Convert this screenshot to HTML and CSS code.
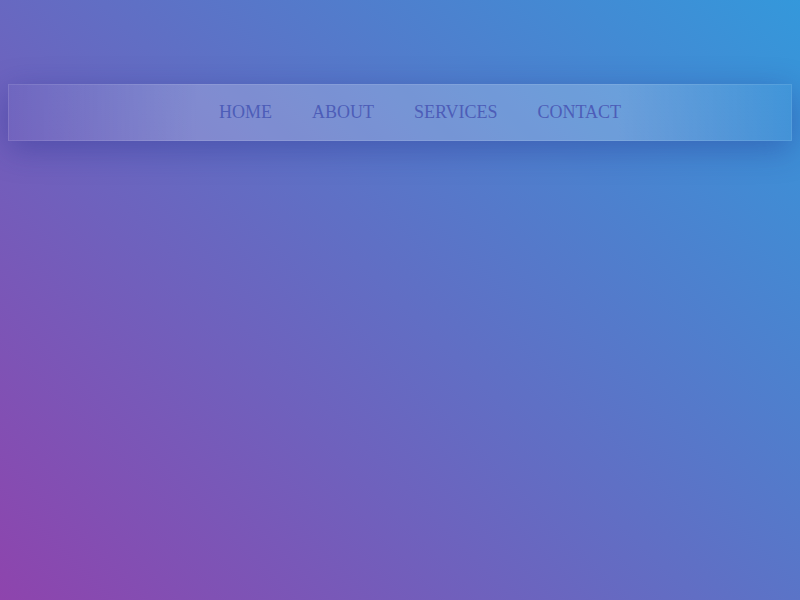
FILE: index.html
```html
<!DOCTYPE html>
<html>
<head>
<meta charset="utf-8">
<link rel="stylesheet" href="styles.css">
</head>
<body>
<nav class="nav">
  <ul class="nav-list">
    <li><a class="nav-link" href="#">HOME</a></li>
    <li><a class="nav-link" href="#">ABOUT</a></li>
    <li><a class="nav-link" href="#">SERVICES</a></li>
    <li><a class="nav-link" href="#">CONTACT</a></li>
  </ul>
</nav>
</body>
</html>
```
FILE: styles.css
```css
html, body {
  height: 100%;
}
body {
  margin: 0;
  padding: 84px 8px 0;
  box-sizing: border-box;
  background: linear-gradient(45deg, #8e44ad 0%, #3498db 100%);
  font-family: "Liberation Serif", "Times New Roman", serif;
  overflow: hidden;
}
.nav {
  height: 57px;
  box-sizing: border-box;
  display: flex;
  justify-content: center;
  align-items: center;
  border: 1px solid rgba(255, 255, 255, 0.1);
  background: linear-gradient(90deg,
    rgba(255, 255, 255, 0.02) 0%,
    rgba(255, 255, 255, 0.2) 24%,
    rgba(255, 255, 255, 0.2) 78%,
    rgba(255, 255, 255, 0.03) 100%);
  box-shadow: 0 8px 32px rgba(31, 38, 135, 0.37);
}
.nav-list {
  display: flex;
  gap: 40px;
  margin: 0;
  padding: 0 0 0 40px;
  list-style: none;
}
.nav-link {
  font-size: 18px;
  color: #4d5db8;
  text-decoration: none;
  display: block;
}
```
